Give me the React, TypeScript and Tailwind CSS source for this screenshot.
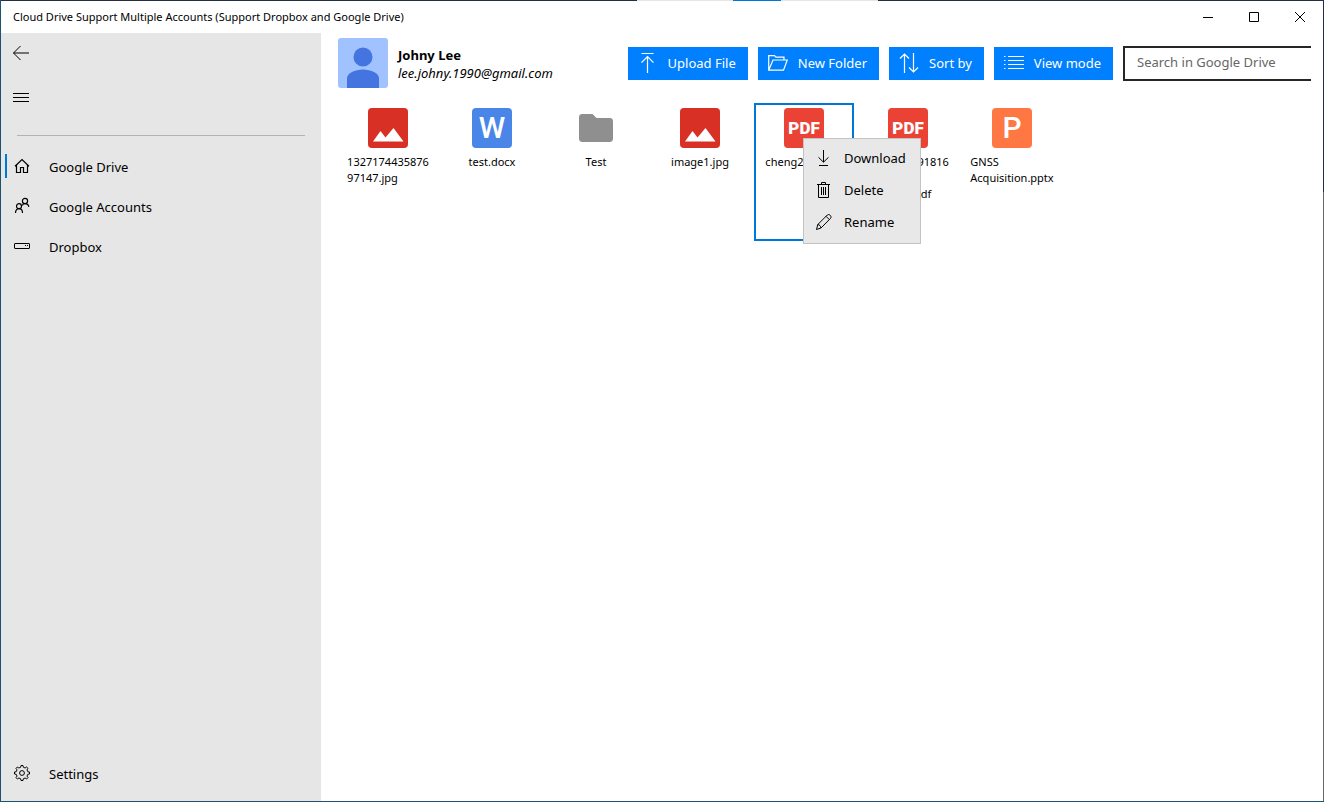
import { useState, type ReactNode } from "react";

// file interface
interface FileInterface {
    name: string;
    kind: "image" | "word" | "folder" | "pdf" | "slides";
}

const files: FileInterface[] = [
    { name: "1327174435876\n97147.jpg", kind: "image" },
    { name: "test.docx", kind: "word" },
    { name: "Test", kind: "folder" },
    { name: "image1.jpg", kind: "image" },
    { name: "cheng2019.pdf", kind: "pdf" },
    { name: "1327174491816\n5023\n9701452.pdf", kind: "pdf" },
    { name: "GNSS\nAcquisition.pptx", kind: "slides" },
];

// thin line icon on a 20px grid
const Icon = ({ children }: { children: ReactNode }) => (
    <svg className="size-5 shrink-0" viewBox="0 0 20 20" fill="none" stroke="currentColor" strokeWidth="1" aria-hidden="true">
        {children}
    </svg>
);

const BackIcon = () => <Icon><path d="M18 10H2.500M9.500 3l-7 7 7 7" /></Icon>;

const MenuIcon = () => <Icon><path d="M2 6.500h16M2 10.500h16M2 14.500h16" /></Icon>;

const HomeIcon = () => (
    <Icon><path strokeWidth="1.2" d="M3 10.300 10 3.500l7 6.800M4.500 9v7.500h4v-5h3v5h4V9" /></Icon>
);

const PeopleIcon = () => (
    <Icon>
        <g strokeWidth="1.2">
            <circle cx="13" cy="5" r="2.600" />
            <circle cx="7" cy="10.200" r="2.500" />
            <path d="M3.500 17c0-2.600 1.300-4.300 3.500-4.300s3.500 1.700 3.500 4.300M10.300 9.500c.4-1.200 1.300-1.900 2.700-1.900 2 0 3.500 1.200 3.800 3.200" />
        </g>
    </Icon>
);

const DriveIcon = () => (
    <Icon>
        <rect x="2.500" y="7.500" width="15" height="5" rx="0.500" />
        <path d="M13 9.500h1M15 9.500h1" />
    </Icon>
);

const GearIcon = () => (
    <Icon>
        <path d="M8.700 4.200 9 2.500h2l.3 1.700 1.800.8 1.500-1 1.400 1.400-1 1.500.8 1.800 1.700.3v2l-1.700.3-.8 1.800 1 1.500-1.400 1.400-1.500-1-1.800.8-.3 1.700H9l-.3-1.700-1.800-.8-1.500 1L4 14.600l1-1.500-.8-1.800L2.500 11V9l1.700-.3L5 6.900l-1-1.500L5.400 4l1.500 1z" />
        <circle cx="10" cy="10" r="2.400" />
    </Icon>
);

const UploadIcon = () => <Icon><path strokeWidth="1.200" d="M3.500.5h12M9.500 20V4M3.500 9.700l6-6 6 6" /></Icon>;

const NewFolderIcon = () => (
    <Icon><path strokeWidth="1.200" d="M.7 17.200V2.700h5.800L8 4.200h8v2.800M.7 17.200 5 7h14.300l-3.800 10.200z" /></Icon>
);

const SortIcon = () => <Icon><path strokeWidth="1.200" d="M5.500 20V1M1 5.500 5.500 1 10 5.500M14.500 0v19M10 14.500l4.500 4.500 4.500-4.500" /></Icon>;

const ListIcon = () => (
    <Icon><path strokeWidth="1.200" d="M0 3.500h1.500M0 7.500h1.500M0 11.500h1.500M0 15.500h1.500M4 3.500h16M4 7.500h16M4 11.500h16M4 15.500h16" /></Icon>
);

const DownloadIcon = () => <Icon><path d="M10.500 2v12M5.500 9.300l5 4.900 5-4.900M6 17.500h9" /></Icon>;

const DeleteIcon = () => (
    <Icon><path d="M4 4.500h13M8.500 4.500v-2h4v2M5.500 4.500v13h10v-13M8.500 7v8M10.500 7v8M12.500 7v8" /></Icon>
);

const RenameIcon = () => (
    <Icon><path d="m3.500 17.500 1.300-5L14.300 3c1.800-1.500 4.800 1.200 3.300 3.300L8 16zM4.800 12.500c1.700.2 3 1.700 3.200 3.500M13 4.300l3.300 3.300" /></Icon>
);

const FileIcon = ({ kind }: { kind: FileInterface["kind"] }) => {
    if (kind === "image") {
        return (
            <svg className="size-10 shrink-0" viewBox="0 0 40 40" aria-hidden="true">
                <rect width="40" height="40" rx="4" fill="#d93025" />
                <path d="M5 33.500 12.500 23l5 6.500L25.500 20l10 13.500z" fill="#fff" />
            </svg>
        )
    }
    if (kind === "folder") {
        return (
            <svg className="size-10 shrink-0" viewBox="0 0 40 40" aria-hidden="true">
                <path d="M6.500 6h10l4 4h13.500a3.400 3.400 0 0 1 3 3.400v17.200a3.400 3.400 0 0 1-3.400 3.400H6.400A3.400 3.400 0 0 1 3 30.600V9.400A3.400 3.400 0 0 1 6.500 6z" fill="#8f8f8f" />
            </svg>
        )
    }
    if (kind === "pdf") {
        return <span className="flex size-10 shrink-0 items-center justify-center rounded bg-[#ea4335] font-[Roboto,sans-serif] text-[17px] font-black text-white">PDF</span>
    }
    return (
        <span className={`flex size-10 shrink-0 items-center justify-center rounded font-[Roboto,sans-serif] text-3xl font-medium text-white ${kind === "word" ? "bg-[#4a86e8]" : "bg-[#ff7743]"}`}>
            {kind === "word" ? "W" : "P"}
        </span>
    )
};

const NavItem = ({ icon, label, active, onClick }: { icon: ReactNode, label: string, active: boolean, onClick: () => void }) => (
    <button type="button" onClick={onClick} className="flex h-10 w-full items-center pl-1 text-left">
        <span className={`h-6 w-0.5 ${active ? "bg-[#0078d7]" : ""}`} />
        <span className="ml-[5px]">{icon}</span>
        <span className="ml-[17px] pt-1">{label}</span>
    </button>
);

const ToolButton = ({ icon, label }: { icon: ReactNode, label: string }) => (
    <button type="button" className="flex h-[33px] shrink-0 items-center gap-2.5 bg-[#0080ff] pr-3 pl-2.5 whitespace-nowrap text-white">
        {icon}
        <span className="pt-0.5">{label}</span>
    </button>
);

const ContextMenu = () => (
    <div className="absolute top-[33px] left-[47px] z-10 w-[118px] border border-[#c3c3c3] bg-[#e8e8e8] pt-[3px] pb-[5px]">
        {[
            { label: "Download", icon: <DownloadIcon /> },
            { label: "Delete", icon: <DeleteIcon /> },
            { label: "Rename", icon: <RenameIcon /> },
        ].map((row) => (
            <button key={row.label} type="button" className="flex h-8 w-full items-center gap-[11px] pl-[9px] hover:bg-[#d5d5d5]">
                {row.icon}
                <span className="pt-0.5">{row.label}</span>
            </button>
        ))}
    </div>
);

const App = () => {

    const [page, setPage] = useState("Google Drive"); // current page
    const [selected, setSelected] = useState(4); // selected file index

    return (
        <div className="relative flex min-h-screen flex-col border-b border-l border-[#1c546e] bg-white pr-px font-['Noto_Sans','Open_Sans',sans-serif] text-[13px] text-black">
            <div className="absolute inset-y-0 right-0 w-px bg-[linear-gradient(#1f2e4d_192px,#686868_192px)]" />
            <div className="flex h-px bg-[#233044]">
                <span className="ml-[48.1%] w-24 bg-[#e6e6e6]" />
                <span className="w-12 bg-[#0078d7]" />
                <span className="w-[97px] bg-[#e6e6e6]" />
            </div>

            <header className="flex h-8 items-center justify-between pl-3">
                <h1 className="text-[11px]">Cloud Drive Support Multiple Accounts (Support Dropbox and Google Drive)</h1>
                <div className="flex">
                    <button type="button" aria-label="Minimize" className="flex h-8 w-[46px] items-center justify-center">
                        <svg className="size-3" viewBox="0 0 12 12" stroke="currentColor"><path d="M1 6.500h10" /></svg>
                    </button>
                    <button type="button" aria-label="Maximize" className="flex h-8 w-[46px] items-center justify-center">
                        <svg className="size-3" viewBox="0 0 12 12" fill="none" stroke="currentColor"><path d="M1.500 1.500h9v9h-9z" /></svg>
                    </button>
                    <button type="button" aria-label="Close" className="flex h-8 w-[46px] items-center justify-center">
                        <svg className="size-3" viewBox="0 0 12 12" stroke="currentColor"><path d="m1 1 10 10M11 1 1 11" /></svg>
                    </button>
                </div>
            </header>

            <div className="flex flex-1">
                <nav className="flex w-80 shrink-0 flex-col bg-[#e6e6e6] pb-2">
                    <button type="button" aria-label="Back" className="flex h-10 w-10 items-center justify-center"><BackIcon /></button>
                    <button type="button" aria-label="Menu" className="mt-1 flex h-10 w-10 items-center justify-center"><MenuIcon /></button>
                    <hr className="mx-4 mt-[18px] mb-2.5 border-[#b3b3b3]" />
                    <NavItem icon={<HomeIcon />} label="Google Drive" active={page === "Google Drive"} onClick={() => setPage("Google Drive")} />
                    <NavItem icon={<PeopleIcon />} label="Google Accounts" active={page === "Google Accounts"} onClick={() => setPage("Google Accounts")} />
                    <NavItem icon={<DriveIcon />} label="Dropbox" active={page === "Dropbox"} onClick={() => setPage("Dropbox")} />
                    <div className="mt-auto">
                        <NavItem icon={<GearIcon />} label="Settings" active={page === "Settings"} onClick={() => setPage("Settings")} />
                    </div>
                </nav>

                <main className="min-w-0 flex-1 pt-[5px] pr-3 pl-[17px]">
                    <div className="flex items-center overflow-hidden">
                        <svg className="size-[50px] shrink-0 rounded-[3px]" viewBox="0 0 50 50" aria-hidden="true">
                            <rect width="50" height="50" fill="#a0c3ff" />
                            <circle cx="25" cy="19" r="9.500" fill="#4374e0" />
                            <path d="M9 50V40.500C9 35 17 31.500 25 31.500S41 35 41 40.500V50z" fill="#4374e0" />
                        </svg>
                        <div className="ml-2.5 pt-0.5 leading-[18px]">
                            <p className="font-bold">Johny Lee</p>
                            <p className="italic">lee.johny.1990@gmail.com</p>
                        </div>
                        <div className="ml-auto flex items-center gap-2.5 pl-4">
                            <ToolButton icon={<UploadIcon />} label="Upload File" />
                            <ToolButton icon={<NewFolderIcon />} label="New Folder" />
                            <ToolButton icon={<SortIcon />} label="Sort by" />
                            <ToolButton icon={<ListIcon />} label="View mode" />
                            <input type="search" aria-label="Search in Google Drive" placeholder="Search in Google Drive" className="h-[35px] w-[188px] shrink-0 border-2 border-r-0 border-[#262626] px-3 pb-0.5 placeholder:text-[#666666]" />
                        </div>
                    </div>

                    <div className="mt-[15px] flex flex-wrap gap-1">
                        {files.map((row, index) => (
                            <div key={index} className={`relative h-[138px] w-[100px] border-2 ${selected === index ? "border-[#0078d7]" : "border-transparent"}`}>
                                <button type="button" onClick={() => setSelected(index)} className="flex size-full flex-col items-center pt-[3px] text-[11px] leading-4">
                                    <FileIcon kind={row.kind} />
                                    <span className="mt-1.5 text-left whitespace-pre">{row.name}</span>
                                </button>
                                {selected === index && <ContextMenu />}
                            </div>
                        ))}
                    </div>
                </main>
            </div>
        </div>
    );
};

export default App;
